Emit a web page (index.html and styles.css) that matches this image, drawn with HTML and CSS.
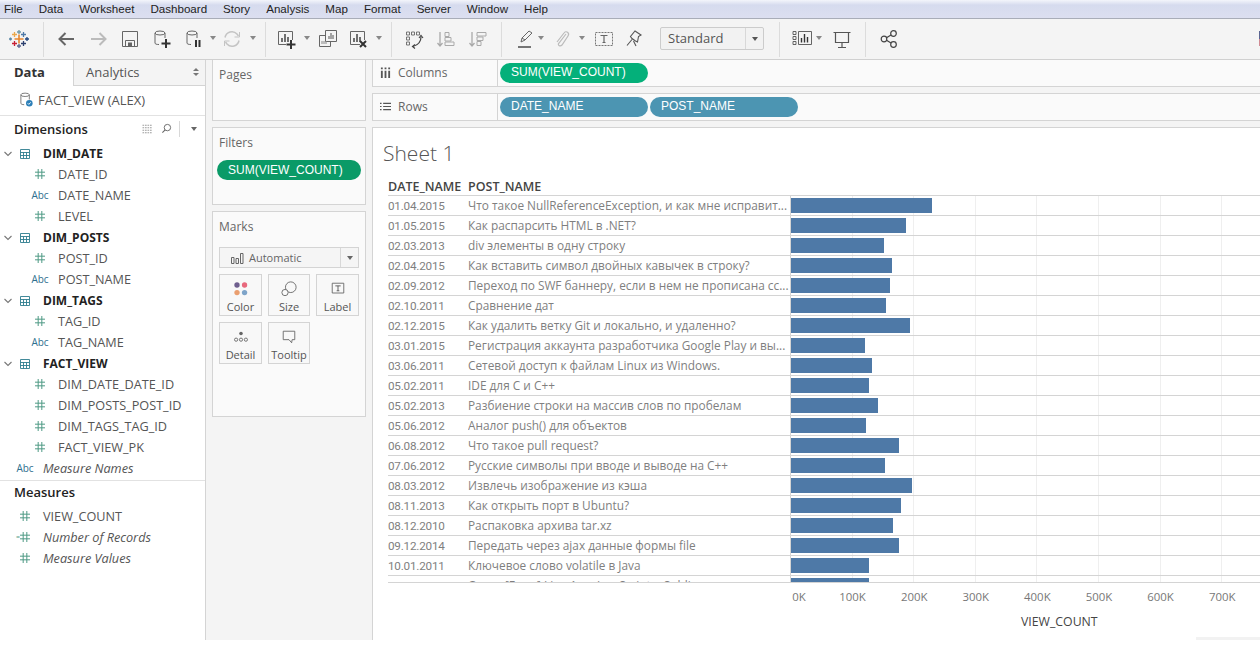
FILE: index.html
```html
<!DOCTYPE html>
<html lang="ru">
<head>
<meta charset="utf-8">
<title>Sheet 1</title>
<link rel="stylesheet" href="styles.css">
</head>
<body>
<nav class="menu">
  <span>File</span><span>Data</span><span>Worksheet</span><span>Dashboard</span><span>Story</span><span>Analysis</span><span>Map</span><span>Format</span><span>Server</span><span>Window</span><span>Help</span>
</nav>
<div class="toolbar">
  <svg class="ti g9" viewBox="0 0 20 20"><g fill="none" stroke-width="1.3"><path d="M10 5.500v9M5.500 10h9" stroke="#e8862d" stroke-width="1.600"/><path d="M10 1v4M8 3h4" stroke="#7099a6"/><path d="M10 15v4M8 17h4" stroke="#5b6591"/><path d="M14.500 3v5M12 5.500h5" stroke="#4e79a7"/><path d="M5.500 3v5M3 5.500h5" stroke="#eba84c"/><path d="M1.500 8.500v3M0 10h3" stroke="#5b87a5"/><path d="M18 8v4M16 10h4" stroke="#1f457e"/><path d="M5.500 12v5M3 14.500h5" stroke="#c72035"/><path d="M14.500 12v5M12 14.500h5" stroke="#2b3f6e"/></g></svg>
  <i class="sep g14"></i>
  <svg class="ti g13" viewBox="0 0 20 20"><path d="M17 10H2.500M8.500 4l-6 6 6 6" fill="none" stroke="#666" stroke-width="2"/></svg>
  <svg class="ti g12" viewBox="0 0 20 20"><path d="M2 10h14.500M10.500 4l6 6-6 6" fill="none" stroke="#bbb" stroke-width="2"/></svg>
  <svg class="ti g11" viewBox="0 0 20 20"><path d="M2.500 2.500h15v15h-15zM5.500 17v-5.500h9V17" fill="none" stroke="#666"/><path d="M8 13.500h4V17H8z" fill="#666"/></svg>
  <svg class="ti g12" viewBox="0 0 20 20"><ellipse cx="8" cy="4" rx="5" ry="2" fill="none" stroke="#666"/><path d="M3 4v10c0 1 1.500 1.500 4 1.500M13 4v5" fill="none" stroke="#666"/><path d="M14 10v9M9.500 14.500h9" stroke="#333" stroke-width="2"/></svg>
  <svg class="ti g12" viewBox="0 0 20 20"><ellipse cx="8" cy="4" rx="5" ry="2" fill="none" stroke="#666"/><path d="M3 4v10c0 1 1.500 1.500 4 1.500M13 4v5" fill="none" stroke="#666"/><path d="M12 11v7M15.500 11v7" stroke="#333" stroke-width="2"/></svg>
  <b class="dd g6"></b>
  <svg class="ti g6" viewBox="0 0 20 20"><path d="M3 8.500a7 7 0 0 1 12-3.500l1.500 2M17 11.500a7 7 0 0 1-12 3.500l-1.500-2" fill="none" stroke="#c4c4c4" stroke-width="1.500"/><path d="M17.500 3v5h-5M2.500 17v-5h5" fill="none" stroke="#c4c4c4"/></svg>
  <b class="dd g8"></b>
  <i class="sep g9"></i>
  <svg class="ti g10" viewBox="0 0 20 20"><path d="M16.500 11V2.500h-14v13H10" fill="none" stroke="#666"/><path d="M6 13V9M9 13V5M12 13V8" stroke="#444" stroke-width="1.500"/><path d="M15 11v9M10.500 15.500h9" stroke="#333" stroke-width="2"/></svg>
  <b class="dd g8"></b>
  <svg class="ti g8" viewBox="0 0 20 20"><path d="M7.500 1.500h11v11h-11z" fill="#f4f4f4" stroke="#666"/><path d="M11 10V7M13 10V4M15 10V6" stroke="#555"/><path d="M7 6.500H1.500v11h11V13" fill="none" stroke="#666"/><path d="M4 15v-3M6 15v-3M8 15v-3" stroke="#888"/></svg>
  <svg class="ti g10" viewBox="0 0 20 20"><path d="M12 15.500H2.500v-13h14V11" fill="none" stroke="#666"/><path d="M6 13V9M9 13V5M12 13V8" stroke="#444" stroke-width="1.500"/><path d="M12 12l6 6M18 12l-6 6" stroke="#333" stroke-width="2"/></svg>
  <b class="dd g8"></b>
  <i class="sep g9"></i>
  <svg class="ti g12" viewBox="0 0 20 20"><path d="M2.500 3h3v3h-3zM7.500 3h3v3h-3zM12.500 3h3v3h-3zM2.500 8h3v3h-3zM2.500 13h3v3h-3z" fill="none" stroke="#666" stroke-width=".9"/><path d="M17 8c0 5-3 8-8 9.500" fill="none" stroke="#444" stroke-width="1.200"/><path d="M15 9l2-2.500L19 9M11 15.500l-2.500 2 2.500 2" fill="none" stroke="#444" stroke-width="1.200"/></svg>
  <svg class="ti g12" viewBox="0 0 20 20"><path d="M4 3v14M1.500 14l2.500 3 2.500-3" fill="none" stroke="#aaa" stroke-width="1.300"/><path d="M9 3.500h4v4H9zM9 8.500h6v3.500H9zM9 13h9v3.500H9z" fill="none" stroke="#aaa"/></svg>
  <svg class="ti g12" viewBox="0 0 20 20"><path d="M4 3v14M1.500 14l2.500 3 2.500-3" fill="none" stroke="#aaa" stroke-width="1.300"/><path d="M9 3.500h9v3.500H9zM9 8h6v3.500H9zM9 12.500h4v4H9z" fill="none" stroke="#aaa"/></svg>
  <i class="sep g13"></i>
  <svg class="ti g14" viewBox="0 0 20 20"><path d="M5 13l1-4 7-7 3 2-7 7zM6 9l3 2" fill="none" stroke="#666"/><path d="M2 18h13" stroke="#555" stroke-width="1.600"/></svg>
  <b class="dd g2"></b>
  <svg class="ti g8" viewBox="0 0 20 20"><path d="M14 5l-7 9c-2 2 1 4 3 2l6-9c2-3-2-6-4-3l-7 9" fill="none" stroke="#bbb" stroke-width="1.200"/></svg>
  <b class="dd g7"></b>
  <svg class="ti g9" viewBox="0 0 20 20"><path d="M1.500 3.500h17v13h-17z" fill="none" stroke="#777" stroke-dasharray="2 1"/><path d="M6.500 6.500h7M10 6.500v7M8.500 13.500h3" fill="none" stroke="#666" stroke-width="1.200"/></svg>
  <svg class="ti g10" viewBox="0 0 20 20"><path d="M11 2l6 4-2.500 1.500-1 5.500-2-1-3.500-2.500-1.500-2zM8 10.500l-5 6M9.500 12l2.500 5" fill="none" stroke="#555" stroke-width="1.100"/></svg>
  <div class="fit g16"><span>Standard</span><b></b></div>
  <i class="sep g15"></i>
  <svg class="ti g12" viewBox="0 0 20 20"><path d="M1 2.500h3v3H1zM1 7.500h3v3H1zM1 12.500h3v3H1zM6.500 2.500h13v13h-13z" fill="none" stroke="#555" stroke-width=".9"/><path d="M9.500 13.500V9M12.500 13.500V5M15.500 13.500V8" stroke="#333" stroke-width="1.400"/></svg>
  <b class="dd g4"></b>
  <svg class="ti g10" viewBox="0 0 20 20"><path d="M1.500 3.500h17M3.500 4v9.500h13V4M10 14v4.500M6 18.500h8" fill="none" stroke="#555" stroke-width="1.200"/></svg>
  <i class="sep g13"></i>
  <svg class="ti g13" viewBox="0 0 20 20"><g fill="none" stroke="#444" stroke-width="1.200"><circle cx="5" cy="10" r="2.800"/><circle cx="14.500" cy="4.500" r="2.800"/><circle cx="14.500" cy="15.500" r="2.800"/><path d="M7.500 8.700l4.500-2.800M7.500 11.300l4.500 2.800"/></g></svg>
  <div class="edge"></div>
</div>
<main class="work">
  <aside class="data">
    <div class="tabs"><div class="tab active">Data</div><div class="tab other">Analytics<span class="updown"></span></div></div>
    <div class="source">
      <svg class="src-ic" viewBox="0 0 16 16"><ellipse cx="6.500" cy="3" rx="4.500" ry="1.800" fill="none" stroke="#777"/><path d="M2 3v9c0 1 1.500 1.500 3.500 1.500M11 3v5" fill="none" stroke="#777"/><circle cx="11" cy="12" r="3.500" fill="#2c7fb8"/><path d="M9.300 12l1.200 1.200 2-2.200" fill="none" stroke="#fff"/></svg>
      FACT_VIEW (ALEX)
    </div>
    <div class="sec-head">Dimensions
      <span class="sec-tools">
        <svg class="st" viewBox="0 0 14 12"><path d="M1 1.500h12M1 4.500h12M1 7.500h12M1 10.500h12" stroke="#888" stroke-dasharray="2 1"/></svg>
        <svg class="st sm" viewBox="0 0 12 12"><circle cx="7" cy="5" r="3.500" fill="none" stroke="#666"/><path d="M4.500 7.500L1.500 10.500" stroke="#666" stroke-width="1.200"/></svg>
        <i class="vsep"></i><b class="dd inl"></b>
      </span>
    </div>
    <ul class="fields" id="dims"></ul>
    <div class="sec-head meas">Measures</div>
    <ul class="fields" id="meas"></ul>
  </aside>
  <section class="cards">
    <div class="card pages"><div class="card-t">Pages</div></div>
    <div class="card filters"><div class="card-t">Filters</div><div class="pill filt">SUM(VIEW_COUNT)</div></div>
    <div class="card marks">
      <div class="card-t">Marks</div>
      <div class="mtype">
        <svg class="bars-ic" viewBox="0 0 14 12"><path d="M1.500 5.500h2.500v6H1.500zM6 6.500h2.500v5H6zM10.500 1.500H13v10h-2.500z" fill="none" stroke="#666"/></svg>
        <span>Automatic</span><b></b>
      </div>
      <div class="mgrid">
        <div class="mbtn"><svg class="mic" viewBox="0 0 18 18"><circle cx="4.500" cy="4.500" r="3" fill="#6f5f8e"/><circle cx="13" cy="4.500" r="3" fill="#e8697d"/><circle cx="4.500" cy="13" r="3" fill="#ea9f70"/><circle cx="13" cy="13" r="3" fill="#7ea4c9"/></svg>Color</div>
        <div class="mbtn"><svg class="mic" viewBox="0 0 18 18"><circle cx="11" cy="7" r="6" fill="none" stroke="#666"/><circle cx="4.500" cy="13" r="3.500" fill="#fafafa" stroke="#666"/></svg>Size</div>
        <div class="mbtn"><svg class="mic" viewBox="0 0 18 18"><path d="M2.500 2.500h13v11h-13z" fill="none" stroke="#666"/><path d="M6 5.500h6M9 5.500v5.500M7.500 11h3" fill="none" stroke="#555"/></svg>Label</div>
        <div class="mbtn"><svg class="mic" viewBox="0 0 18 18"><circle cx="9" cy="5" r="2" fill="#666"/><circle cx="3.500" cy="12" r="1.800" fill="none" stroke="#666"/><circle cx="9" cy="12" r="1.800" fill="none" stroke="#666"/><circle cx="14.500" cy="12" r="1.800" fill="none" stroke="#666"/></svg>Detail</div>
        <div class="mbtn"><svg class="mic" viewBox="0 0 18 18"><path d="M2.500 2.500h13v9.500h-3l-.5 3.500-3-3.500H2.500z" fill="none" stroke="#666"/></svg>Tooltip</div>
      </div>
    </div>
  </section>
  <section class="view">
    <div class="shelf">
      <div class="shelf-l"><svg class="sh-ic" viewBox="0 0 12 12"><path d="M2 4v8M6 4v8M10 4v8M2 .5v2M6 .5v2M10 .5v2" stroke="#555" stroke-width="2"/></svg>Columns</div>
      <div class="shelf-p"><div class="pill green">SUM(VIEW_COUNT)</div></div>
    </div>
    <div class="shelf">
      <div class="shelf-l"><svg class="sh-ic" viewBox="0 0 14 12"><path d="M0 2h2M4 2h10M0 6h2M4 6h10M0 10h2M4 10h10" stroke="#555" stroke-width="1.500"/></svg>Rows</div>
      <div class="shelf-p"><div class="pill blue">DATE_NAME</div><div class="pill blue">POST_NAME</div></div>
    </div>
    <div class="canvas">
      <h1 class="title">Sheet 1</h1>
      <div class="thead"><span class="c-date">DATE_NAME</span><span class="c-post">POST_NAME</span></div>
      <div class="rows" id="rows"></div>
      <div class="axis" id="axis"></div>
      <div class="axis-title">VIEW_COUNT</div>
    </div>
  </section>
</main>
<script src="app.js"></script>
</body>
</html>
```
FILE: app.js
```js
const dimData = [
  ['t','DIM_DATE'],['n','DATE_ID'],['a','DATE_NAME'],['n','LEVEL'],
  ['t','DIM_POSTS'],['n','POST_ID'],['a','POST_NAME'],
  ['t','DIM_TAGS'],['n','TAG_ID'],['a','TAG_NAME'],
  ['t','FACT_VIEW'],['n','DIM_DATE_DATE_ID'],['n','DIM_POSTS_POST_ID'],['n','DIM_TAGS_TAG_ID'],['n','FACT_VIEW_PK'],
  ['ai','Measure Names']
];
const measData = [['m','VIEW_COUNT'],['mc','Number of Records'],['mi','Measure Values']];
const hash = '<svg class="hash" viewBox="0 0 11 11"><path d="M3.500 0v11M7.500 0v11M0 3.500h11M0 7.500h11" stroke="#4f9a85" stroke-width="1.100"/></svg>';
const chev = '<svg class="chev" viewBox="0 0 8 6"><path d="M.5 1l3.500 3.500L7.500 1" fill="none" stroke="#777" stroke-width="1.100"/></svg>';
const tbl = '<svg class="tbl" viewBox="0 0 10 10"><path d="M.500.500h9v9h-9zM.500 3.500h9M.500 6.500h9M3.500 3.500v6M6.500 3.500v6" fill="none" stroke="#2e7d8f" stroke-width=".9"/></svg>';
function fieldRow(k, name) {
  if (k === 't') return `<li class="f f-table">${chev}${tbl}<span>${name}</span></li>`;
  if (k === 'n') return `<li class="f f-child"><span class="slot">${hash}</span><span>${name}</span></li>`;
  if (k === 'a') return `<li class="f f-child"><span class="slot abc">Abc</span><span>${name}</span></li>`;
  if (k === 'ai') return `<li class="f f-top it"><span class="slot abc">Abc</span><span>${name}</span></li>`;
  if (k === 'm') return `<li class="f f-m"><span class="slot">${hash}</span><span>${name}</span></li>`;
  if (k === 'mc') return `<li class="f f-m it"><span class="slot"><em class="eq">=</em>${hash}</span><span>${name}</span></li>`;
  return `<li class="f f-m it"><span class="slot">${hash}</span><span>${name}</span></li>`;
}
document.getElementById('dims').innerHTML = dimData.map(d => fieldRow(d[0], d[1])).join('');
document.getElementById('meas').innerHTML = measData.map(d => fieldRow(d[0], d[1])).join('');
const rows = [
  ['01.04.2015','Что такое NullReferenceException, и как мне исправит...',141],
  ['01.05.2015','Как распарсить HTML в .NET?',115],
  ['02.03.2013','div элементы в одну строку',93],
  ['02.04.2015','Как вставить символ двойных кавычек в строку?',101],
  ['02.09.2012','Переход по SWF баннеру, если в нем не прописана сс...',99],
  ['02.10.2011','Сравнение дат',95],
  ['02.12.2015','Как удалить ветку Git и локально, и удаленно?',119],
  ['03.01.2015','Регистрация аккаунта разработчика Google Play и вы...',74],
  ['03.06.2011','Сетевой доступ к файлам Linux из Windows.',81],
  ['05.02.2011','IDE для С и С++',78],
  ['05.02.2013','Разбиение строки на массив слов по пробелам',87],
  ['05.06.2012','Аналог push() для объектов',75],
  ['06.08.2012','Что такое pull request?',108],
  ['07.06.2012','Русские символы при вводе и выводе на С++',94],
  ['08.03.2012','Извлечь изображение из кэша',121],
  ['08.11.2013','Как открыть порт в Ubuntu?',110],
  ['08.12.2010','Распаковка архива tar.xz',102],
  ['09.12.2014','Передать через ajax данные формы file',108],
  ['10.01.2011','Ключевое слово volatile в Java',78],
  ['10.05.2015','Ответ [Error] Line 1 на JavaScript в Sublime',78]
];
document.getElementById('rows').innerHTML = rows.map(r =>
  `<div class="row"><span class="c-date">${r[0]}</span><span class="c-post">${r[1]}</span><div class="plot"><div class="bar" style="width:${r[2]}px"></div></div></div>`
).join('');
document.getElementById('axis').innerHTML = ['0K','100K','200K','300K','400K','500K','600K','700K']
  .map(t => `<span>${t}</span>`).join('');
```
FILE: styles.css
```css
* { box-sizing: border-box; }
html, body { margin: 0; height: 100%; }
body {
  width: 1260px; height: 648px; overflow: hidden; background: #fff;
  font-family: "Open Sans", "Noto Sans", sans-serif; color: #555;
  font-size: 12px; display: flex; flex-direction: column;
}
i, em, b { display: block; font-style: normal; }

.menu {
  height: 19px; flex: none; display: flex; gap: 16px; padding: 0 0 1px 4px; align-items: center;
  background: linear-gradient(#f3f5fb 0, #d6dbee 5px, #dcdff0 100%);
  border-bottom: 1px solid #a9adb8;
  font: 11.6px "Liberation Sans", sans-serif; color: #222;
}

.toolbar {
  height: 41px; flex: none; background: #f4f4f4; border-bottom: 1px solid #d0d0d0;
  display: flex; align-items: center;
}
.ti { width: 20px; height: 20px; flex: none; }
.g2 { margin-left: 2px; } .g4 { margin-left: 4px; } .g6 { margin-left: 6px; } .g7 { margin-left: 7px; }
.g8 { margin-left: 8px; } .g9 { margin-left: 9px; } .g10 { margin-left: 10px; } .g11 { margin-left: 11px; }
.g12 { margin-left: 12px; } .g13 { margin-left: 13px; } .g14 { margin-left: 14px; } .g15 { margin-left: 15px; }
.g16 { margin-left: 16px; }
.sep { width: 1px; height: 35px; background: #dcdcdc; flex: none; }
.dd { width: 6px; height: 4px; flex: none; margin-top: -2px; border: 3px solid transparent; border-top: 4px solid #888; border-bottom: 0; }
.fit {
  width: 104px; height: 23px; margin-top: -1px; border: 1px solid #ccc; background: #f2f2f2; border-radius: 2px;
  display: flex; align-items: center; font-size: 13px; color: #555; flex: none;
}
.fit span { flex: 1; padding: 0 0 2px 7px; }
.fit b { align-self: stretch; width: 18px; border-left: 1px solid #d8d8d8; display: flex; align-items: center; justify-content: center; }
.fit b::after { content: ""; border: 3px solid transparent; border-top: 4px solid #555; border-bottom: 0; }
.edge { margin-left: auto; margin-top: -1px; width: 1px; height: 15px; background: linear-gradient(#5b6591 50%, #d08a93 50%); flex: none; }

.work { flex: none; display: flex; height: 580px; background: #fff; }
.data { width: 206px; flex: none; background: #fff; border-right: 1px solid #d4d4d4; }
.tabs { display: flex; height: 26px; }
.tab { display: flex; align-items: center; font-size: 13px; color: #555; padding-bottom: 2px; }
.tab.active { width: 73px; padding-left: 14px; font-weight: 700; color: #333; }
.tab.other { flex: 1; padding-left: 12px; padding-right: 6px; justify-content: space-between; background: #f4f4f4; border-left: 1px solid #d4d4d4; border-bottom: 1px solid #d4d4d4; }
.updown { width: 6px; height: 8px; display: flex; flex-direction: column; justify-content: space-between; }
.updown::before { content: ""; border-left: 3px solid transparent; border-right: 3px solid transparent; border-bottom: 3px solid #777; }
.updown::after { content: ""; border-left: 3px solid transparent; border-right: 3px solid transparent; border-top: 3px solid #777; }
.source { height: 30px; display: flex; align-items: center; padding: 0 0 2px 19px; gap: 4px; border-bottom: 1px solid #e2e2e2; font-size: 13px; letter-spacing: -.02px; color: #555; }
.src-ic { width: 15px; height: 15px; }
.sec-head { height: 27px; display: flex; align-items: center; padding: 0 8px 2px 14px; font-size: 13px; font-weight: 600; color: #222; }
.sec-tools { margin-left: auto; display: flex; align-items: center; gap: 7px; }
.st { width: 13px; height: 10px; }
.st.sm { width: 11px; height: 11px; }
.vsep { width: 1px; height: 16px; background: #d8d8d8; margin: 0 1px 0 0; }
.dd.inl { border-top-color: #666; margin: 0 0 0 3px; }
.sec-head.meas { height: 26px; margin-top: 1px; border-top: 1px solid #e2e2e2; padding-bottom: 3px; }
.fields { list-style: none; margin: 0; padding: 0; }
.f { height: 21px; display: flex; align-items: center; font-size: 12.7px; color: #555; white-space: nowrap; padding-bottom: 2px; }
.f-table { font-weight: 700; font-size: 12px; color: #222; padding: 0 0 0 4px; }
.chev { width: 8px; height: 6px; margin-right: 8px; }
.tbl { width: 10px; height: 10px; margin-right: 13px; }
.slot { display: flex; align-items: center; justify-content: center; width: 18px; flex: none; position: relative; }
.f-child { padding-left: 31px; }
.f-child .slot { margin-right: 9px; }
.f-top, .f-m { padding-left: 16px; }
.f-top .slot, .f-m .slot { margin-right: 9px; }
.it { font-style: italic; }
.hash { width: 10px; height: 10px; }
.abc { font-size: 10px; font-style: normal; color: #2f6f8f; font-weight: 400; }
.eq { position: absolute; left: 0; font-size: 7px; font-style: normal; color: #4f9a85; line-height: 1; }

.cards { width: 166px; flex: none; padding: 0 6px; display: flex; flex-direction: column; gap: 6px; background: #f4f4f4; }
.card { border: 1px solid #d4d4d4; background: #fafafa; flex: none; }
.card-t { font-size: 12px; color: #666; padding: 7px 0 0 6px; line-height: 16px; }
.pages { height: 61px; border-top-width: 0; }
.filters { height: 78px; }
.marks { height: 206px; }
.pill {
  height: 20px; border-radius: 10px; color: #fff; font-size: 12px; line-height: 19px; padding-left: 11px;
  font-family: "Liberation Sans", sans-serif; flex: none;
}
.filt { background: #0a9a67; margin: 9px 4px 0; width: 144px; line-height: 20px; }
.green { background: #04b07a; width: 148px; }
.blue { background: #4c95b2; width: 148px; }
.mtype {
  margin: 12px 6px 0; height: 21px; border: 1px solid #d4d4d4; background: #f5f5f5; display: flex; align-items: center;
  padding-left: 10px; font-size: 11px; color: #666; gap: 5px;
}
.mtype span { flex: 1; }
.bars-ic { width: 14px; height: 12px; }
.mtype b { align-self: stretch; width: 18px; border-left: 1px solid #d8d8d8; display: flex; align-items: center; justify-content: center; }
.mtype b::after { content: ""; border: 3px solid transparent; border-top: 4px solid #666; border-bottom: 0; }
.mgrid { margin: 6px 6px 0; display: grid; grid-template-columns: 43px 42px 43px; gap: 6px; }
.mbtn {
  height: 42px; border: 1px solid #d4d4d4; background: #f8f8f8; display: flex; flex-direction: column; align-items: center;
  justify-content: flex-end; font-size: 11px; color: #555; padding-bottom: 1px; line-height: 15px; gap: 2px;
}
.mic { width: 16px; height: 16px; }

.view { flex: 1; display: flex; flex-direction: column; min-width: 0; gap: 6px; background: #f4f4f4; }
.shelf { height: 27px; display: flex; background: #fafafa; border-bottom: 1px solid #d4d4d4; border-left: 1px solid #d4d4d4; flex: none; }
.shelf + .shelf { height: 28px; border-top: 1px solid #d4d4d4; }
.shelf-l { width: 125px; flex: none; display: flex; align-items: center; gap: 7px; padding: 0 0 2px 7px; border-right: 1px solid #d4d4d4; font-size: 12px; color: #666; }
.sh-ic { width: 11px; height: 11px; }
.shelf-p { display: flex; padding: 3px 0 0 2px; gap: 2px; }
.canvas { height: 513px; flex: none; background: #fff; border: 1px solid #d4d4d4; border-width: 1px 0 0 1px; padding-left: 15px; position: relative; }
.canvas::after { content: ""; position: absolute; right: 0; bottom: 0; width: 64px; height: 3px; background: #f2f2f2; }
.title { margin: 14px 0 0 -5px; font-size: 21px; font-weight: 300; line-height: 22px; color: #555; height: 22px; }
.thead { display: flex; margin-top: 13px; height: 18px; padding-top: 1px; align-items: center; font-weight: 600; color: #444; font-size: 12.5px; }
.c-date { width: 80px; flex: none; }
.c-post { width: 322px; flex: none; overflow: hidden; white-space: nowrap; }
.rows { height: 388px; overflow: hidden; border-bottom: 1px solid #d4d4d4; border-top: 1px solid #d4d4d4; }
.row { display: flex; height: 20px; align-items: center; border-bottom: 1px solid #d4d4d4; color: #7f7f7f; font-size: 11.85px; }
.row .c-post { padding-bottom: 2px; }
.row .c-date { font-family: Roboto, sans-serif; font-size: 11.7px; letter-spacing: -.2px; }
.plot {
  flex: 1; align-self: stretch; border-left: 1px solid #d4d4d4; display: flex; align-items: center;
  background: repeating-linear-gradient(90deg, transparent 0, transparent 60.600px, #efefef 60.600px, #efefef 61.600px);
}
.bar { height: 15px; background: #4e79a7; }
.axis { display: flex; margin: 6px 0 0 372.200px; font-size: 11.400px; color: #777; line-height: 16px; }
.axis span { width: 61.600px; text-align: center; flex: none; }
.axis span:first-child { padding-left: 16px; }
.axis-title { margin: 9px 0 0 633px; font-size: 12.300px; color: #444; line-height: 16px; }
```
